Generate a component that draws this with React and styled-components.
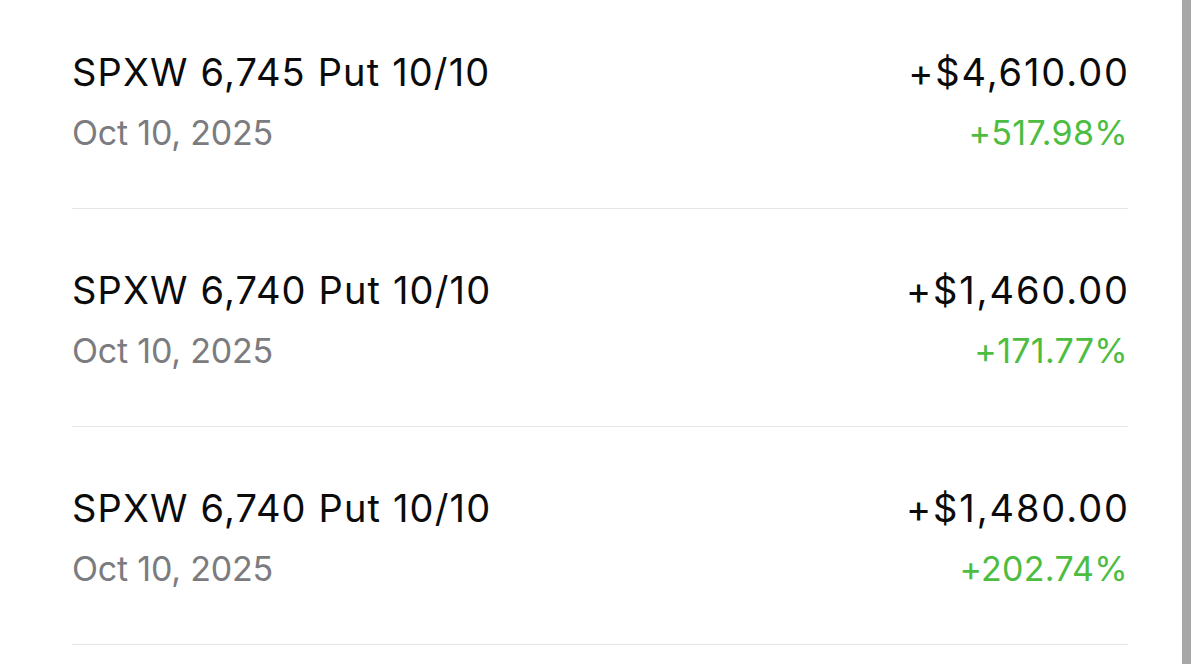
import React from 'react';
import styled, { createGlobalStyle } from 'styled-components';

const GlobalStyle = createGlobalStyle`
  html, body {
    margin: 0;
    padding: 0;
    background: #ffffff;
  }
  body {
    font-family: Inter, "Noto Sans", sans-serif;
    -webkit-font-smoothing: antialiased;
  }
`;

const Page = styled.div`
  display: flex;
  height: 664px;
  overflow: hidden;
  padding-left: 72px;
  background: #ffffff;
`;

const List = styled.div`
  width: 1056px;
  display: flex;
  flex-direction: column;
`;

const Row = styled.div`
  display: flex;
  justify-content: space-between;
  padding: 58px 0 55px;
  border-bottom: 1px solid #e6e6e8;

  &:first-child {
    padding-top: 49px;
  }
`;

const Col = styled.div`
  display: flex;
  flex-direction: column;
  gap: 17px;
  align-items: ${(p) => (p.$right ? 'flex-end' : 'flex-start')};
`;

const Title = styled.div`
  font-size: 38px;
  line-height: 46px;
  color: #0b0b0b;
  letter-spacing: ${(p) => (p.$amount ? '1.9px' : '1.15px')};
  margin-right: ${(p) => (p.$amount ? '-1.9px' : '0')};
`;

const Sub = styled.div`
  font-size: 34px;
  line-height: 41px;
  color: ${(p) => (p.$green ? '#4dbd41' : '#7b7b80')};
  letter-spacing: ${(p) => (p.$green ? '0.3px' : '-0.2px')};
`;

const Scrollbar = styled.div`
  margin-left: 54px;
  width: 9px;
  height: 100%;
  background: #a7a7a7;
`;

const trades = [
  { name: 'SPXW 6,745 Put 10/10', date: 'Oct 10, 2025', amount: '+$4,610.00', pct: '+517.98%' },
  { name: 'SPXW 6,740 Put 10/10', date: 'Oct 10, 2025', amount: '+$1,460.00', pct: '+171.77%' },
  { name: 'SPXW 6,740 Put 10/10', date: 'Oct 10, 2025', amount: '+$1,480.00', pct: '+202.74%' },
];

export default function App() {
  return (
    <>
      <GlobalStyle />
      <Page>
        <List>
          {trades.map((t, i) => (
            <Row key={i}>
              <Col>
                <Title>{t.name}</Title>
                <Sub>{t.date}</Sub>
              </Col>
              <Col $right>
                <Title $amount>{t.amount}</Title>
                <Sub $green>{t.pct}</Sub>
              </Col>
            </Row>
          ))}
        </List>
        <Scrollbar />
      </Page>
    </>
  );
}
